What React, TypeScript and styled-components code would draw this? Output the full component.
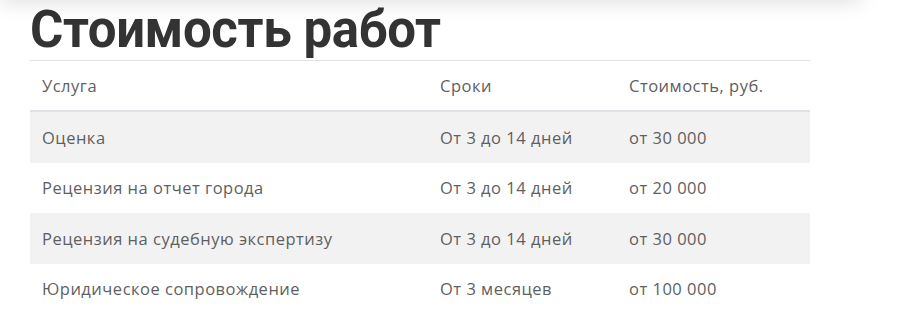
import React from "react";
import styled, { createGlobalStyle } from "styled-components";

const GlobalStyle = createGlobalStyle`
  html, body {
    margin: 0;
    padding: 0;
    background: #fff;
  }
  body {
    font-family: "Open Sans", "Noto Sans", sans-serif;
    color: #5f5f5f;
  }
`;

type Row = { service: string; term: string; price: string };

const rows: Row[] = [
  { service: "Оценка", term: "От 3 до 14 дней", price: "от 30 000" },
  { service: "Рецензия на отчет города", term: "От 3 до 14 дней", price: "от 20 000" },
  { service: "Рецензия на судебную экспертизу", term: "От 3 до 14 дней", price: "от 30 000" },
  { service: "Юридическое сопровождение", term: "От 3 месяцев", price: "от 100 000" },
];

export default function App() {
  return (
    <Page>
      <GlobalStyle />
      <TopBar />
      <Section>
        <Title>Стоимость работ</Title>
        <PriceTable>
          <thead>
            <tr>
              <Th $w={374}>Услуга</Th>
              <Th $w={165}>Сроки</Th>
              <Th>Стоимость, руб.</Th>
            </tr>
          </thead>
          <tbody>
            {rows.map((r, i) => (
              <Tr key={r.service} $striped={i % 2 === 0}>
                <Td>{r.service}</Td>
                <Td>{r.term}</Td>
                <Td>{r.price}</Td>
              </Tr>
            ))}
          </tbody>
        </PriceTable>
      </Section>
    </Page>
  );
}

const Page = styled.div`
  position: relative;
  width: 907px;
  height: 335px;
  overflow: hidden;
`;

// shadow of the fixed site header that sits just above the fold
const TopBar = styled.div`
  position: absolute;
  left: 0;
  top: -60px;
  width: 860px;
  height: 60px;
  background: #fff;
  box-shadow: 0 0 22px rgba(0, 0, 0, 0.16);
`;

const Section = styled.div`
  padding: 0 0 0 30px;
  width: 780px;
`;

const Title = styled.h2`
  margin: 0;
  height: 60px;
  font-family: Roboto, "Open Sans", sans-serif;
  font-weight: 700;
  font-size: 51px;
  line-height: 60px;
  letter-spacing: -0.4px;
  color: #333;
`;

const PriceTable = styled.table`
  width: 780px;
  border-collapse: collapse;
  table-layout: fixed;
`;

const Th = styled.th<{ $w?: number }>`
  width: ${(p) => (p.$w ? `${p.$w}px` : "auto")};
  text-align: left;
  font-weight: 400;
  font-size: 16.5px;
  letter-spacing: 0.5px;
  color: #5f5f5f;
  height: 49px;
  padding: 0 12px;
  border-top: 1px solid #e3e3e3;
  border-bottom: 2px solid #dee2e6;
`;

const Tr = styled.tr<{ $striped: boolean }>`
  background: ${(p) => (p.$striped ? "#f2f2f2" : "#fff")};
  & + & td {
    border-top: 1px solid #dee2e6;
  }
`;

const Td = styled.td`
  height: 50.5px;
  padding: 0 12px;
  font-size: 16.5px;
  letter-spacing: 0.5px;
  color: #5f5f5f;
`;
